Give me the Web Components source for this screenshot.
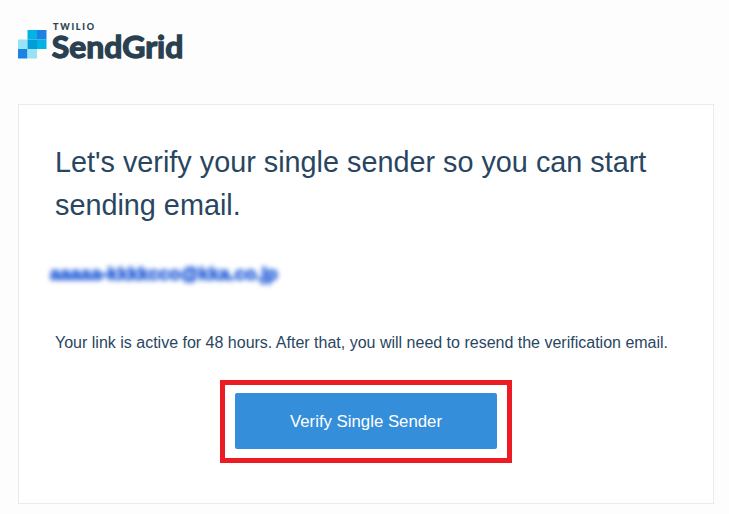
<!DOCTYPE html>
<html lang="en"><head><meta charset="utf-8"><title>Verify Single Sender</title>
<style>body{margin:0;background:#fdfdfd;font-family:"Liberation Sans",Arial,sans-serif;color:#294661}</style></head>
<body>
<verify-email>
<brand-logo slot="logo"></brand-logo>
<mail-card>
<span slot="title">Let's verify your single sender so you can start sending email.</span>
<blurred-address slot="address">aaaaa-kkkkcco@kka.co.jp</blurred-address>
<span slot="note">Your link is active for 48 hours. After that, you will need to resend the verification email.</span>
<verify-button slot="action">Verify Single Sender</verify-button>
</mail-card>
</verify-email>
<script>
const define=(name,html)=>customElements.define(name,class extends HTMLElement{
 constructor(){super();this.attachShadow({mode:"open"}).innerHTML=html;}
});
define("verify-email",`<style>:host{display:flex;flex-direction:column;box-sizing:border-box;width:729px;height:514px;padding:20px 15px 10px 18px;gap:40px;overflow:hidden}</style><slot name="logo"></slot><slot></slot>`);
define("brand-logo",`<style>:host{display:block;height:44px;flex:none}svg{display:block;overflow:visible}text{fill:#294050}</style>
<svg width="170" height="44" viewBox="18 20 170 44">
<g><path fill="#00b3e3" d="M27.5 30H37v9.5h-9.5zM37 39.5h9.5V49H37z"/><path fill="#1a82e2" d="M37 30h9.5v9.5H37zM18 49h9.5v9.5H18z"/><path fill="#99e1f4" d="M18 39.5h9.5V49H18zM27.5 49H37v9.5h-9.5z"/><path fill="#009dd9" d="M27.5 39.5H37V49h-9.5z"/></g>
<text x="53" y="29.8" font-family="Lato,sans-serif" font-weight="700" font-size="9" stroke="#294050" stroke-width=".2" textLength="41">TWILIO</text>
<text x="51.8" y="57.9" font-family="Lato,sans-serif" font-weight="700" font-size="31" stroke="#294050" stroke-width="1.3" textLength="131.5" lengthAdjust="spacingAndGlyphs">SendGrid</text>
</svg>`);
define("mail-card",`<style>:host{display:flex;flex-direction:column;box-sizing:border-box;width:696px;height:400px;border:1px solid #ebebeb;background:#fff;padding:36px 36px 0}
h1{margin:0;font-weight:400;font-size:28.8px;line-height:43px}
.address{margin:31px 0 0 -5px;height:32px}
p{margin:41px 0 0;font-size:16px;line-height:24px;white-space:nowrap}
.action{display:flex;justify-content:center;margin:25px 0 0}</style>
<h1><slot name="title"></slot></h1><div class="address"><slot name="address"></slot></div><p><slot name="note"></slot></p><div class="action"><slot name="action"></slot></div>`);
define("blurred-address",`<style>:host{display:inline-block;font-size:18.5px;line-height:32px;font-weight:700;color:#1f5bd8;-webkit-text-stroke:.9px #1f5bd8;filter:blur(2.5px);white-space:nowrap}</style><slot></slot>`);
define("verify-button",`<style>:host{display:block;box-sizing:border-box;width:292px;height:83px;border:5px solid #ed1c24;padding:8px 10px 9px}
button{display:block;width:262px;height:56px;border:0;border-radius:2px;background:#348eda;color:#fff;font:16.8px "Liberation Sans",Arial,sans-serif;padding:1px 0 0}</style><button><slot></slot></button>`);
</script></body></html>
